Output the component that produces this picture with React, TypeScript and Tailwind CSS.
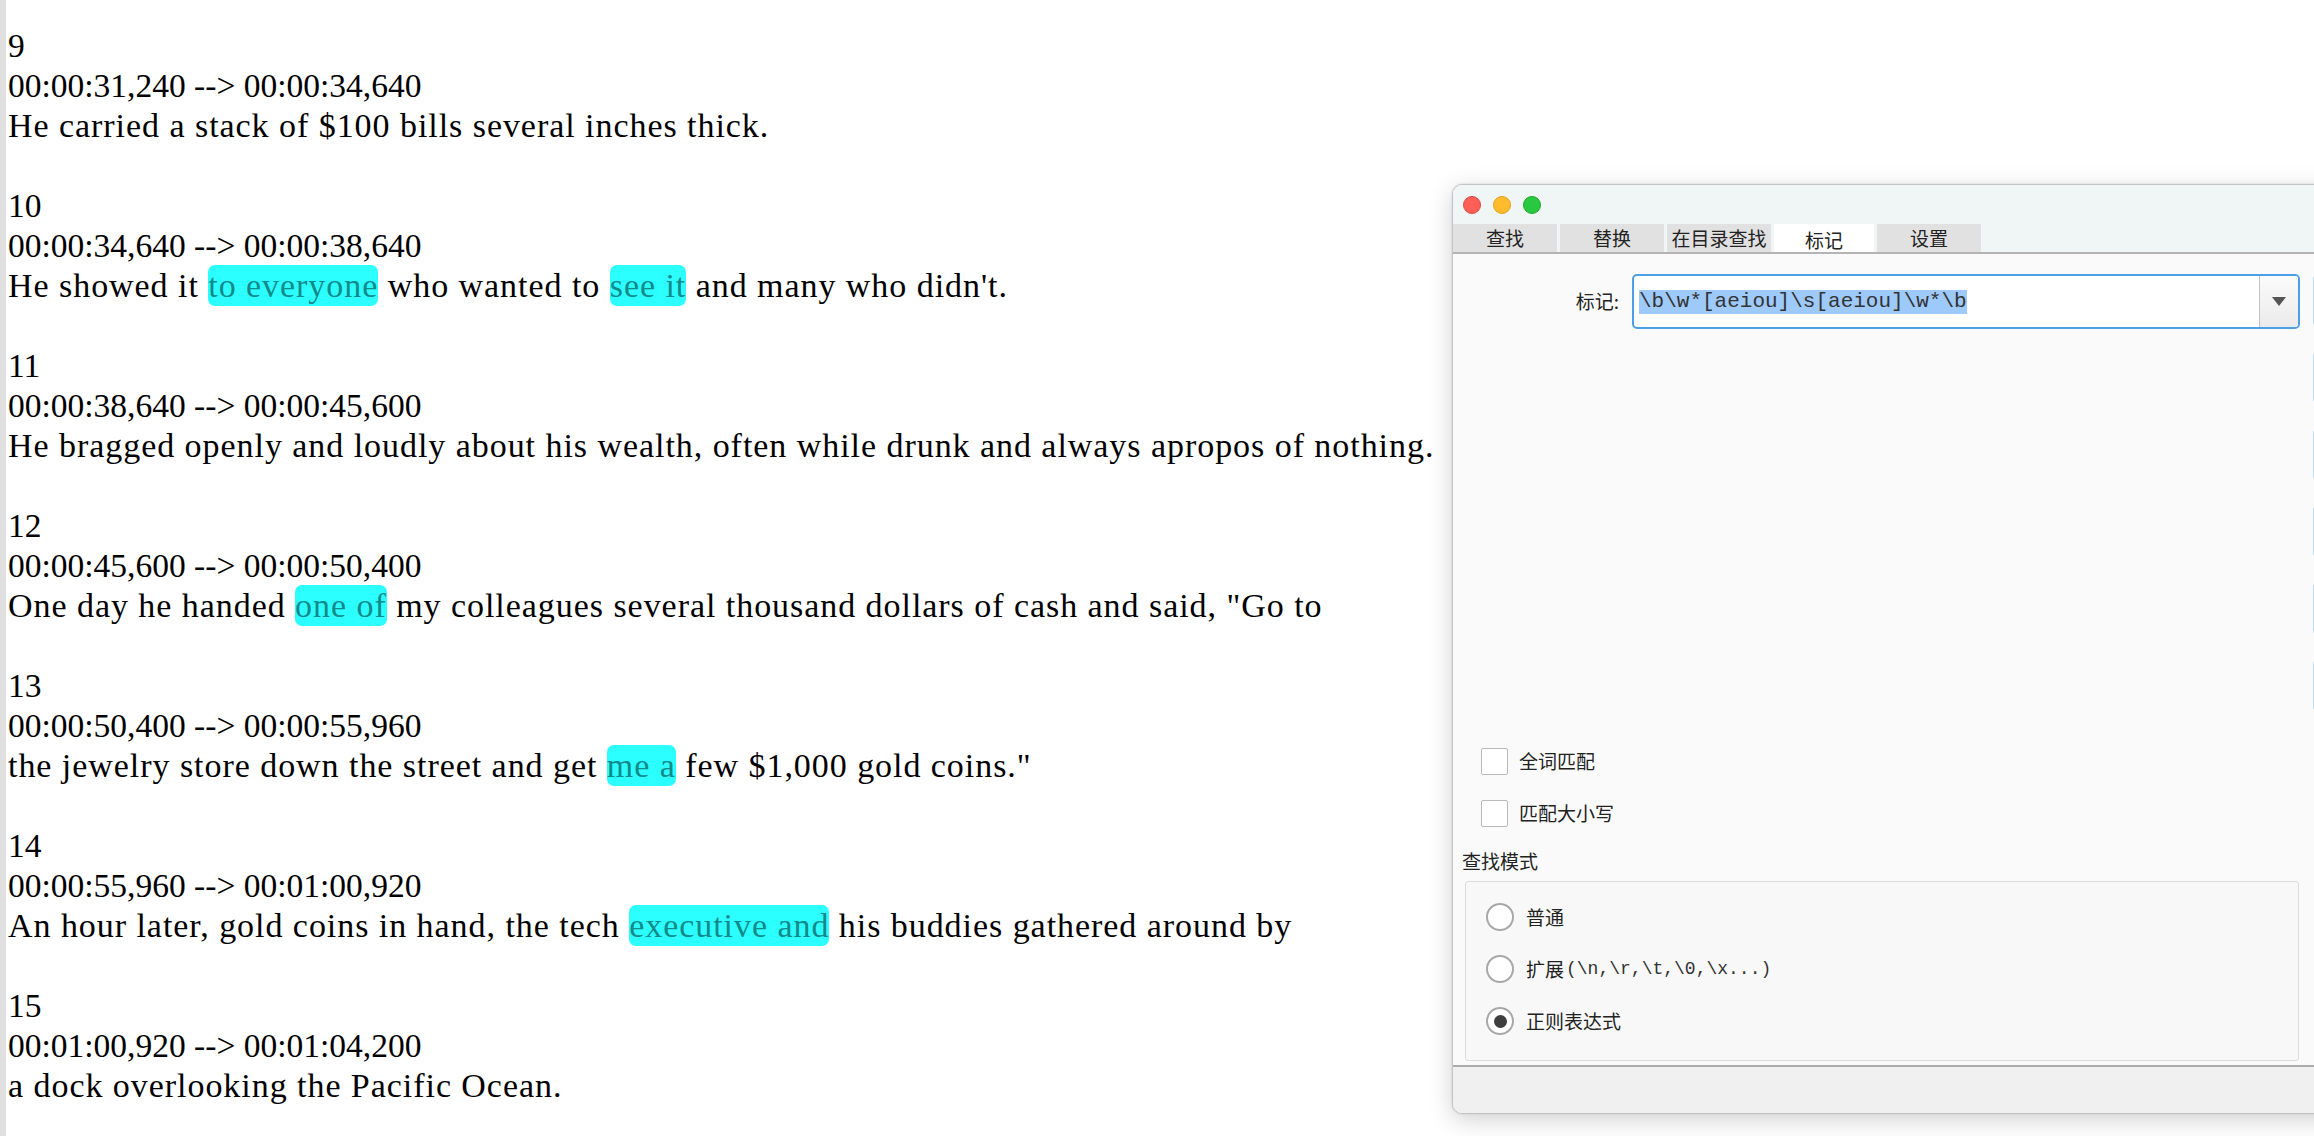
import React, { FC } from 'react';

type Seg = [string, boolean?];

interface Cue {
  index: number;
  time: string;
  text: Seg[];
}

const cues: Cue[] = [
  { index: 9, time: '00:00:31,240 --> 00:00:34,640', text: [['He carried a stack of $100 bills several inches thick.']] },
  {
    index: 10,
    time: '00:00:34,640 --> 00:00:38,640',
    text: [['He showed it '], ['to everyone', true], [' who wanted to '], ['see it', true], [" and many who didn't."]],
  },
  {
    index: 11,
    time: '00:00:38,640 --> 00:00:45,600',
    text: [['He bragged openly and loudly about his wealth, often while drunk and always apropos of nothing.']],
  },
  {
    index: 12,
    time: '00:00:45,600 --> 00:00:50,400',
    text: [['One day he handed '], ['one of', true], [' my colleagues several thousand dollars of cash and said, "Go to']],
  },
  {
    index: 13,
    time: '00:00:50,400 --> 00:00:55,960',
    text: [['the jewelry store down the street and get '], ['me a', true], [' few $1,000 gold coins."']],
  },
  {
    index: 14,
    time: '00:00:55,960 --> 00:01:00,920',
    text: [['An hour later, gold coins in hand, the tech '], ['executive and', true], [' his buddies gathered around by']],
  },
  { index: 15, time: '00:01:00,920 --> 00:01:04,200', text: [['a dock overlooking the Pacific Ocean.']] },
];

const serif = "font-['Liberation_Serif','DejaVu_Serif',serif]";
const cjk = "font-['Noto_Sans_CJK_SC','Noto_Sans',sans-serif]";
const mono = "font-['Liberation_Mono','DejaVu_Sans_Mono',monospace]";

const CueBlock: FC<{ cue: Cue }> = ({ cue }) => (
  <div className="flex flex-col">
    <div className="h-[40px] leading-[40px] text-[33.5px]">{cue.index}</div>
    <div className="h-[40px] leading-[40px] text-[33.5px]">{cue.time}</div>
    <div className="h-[40px] leading-[40px] text-[34px] tracking-[0.95px] whitespace-nowrap">
      {cue.text.map(([t, hl], i) =>
        hl ? (
          <span key={i} className="bg-[#2cffff] text-[#128a8a] rounded-[7px] py-[2px]">
            {t}
          </span>
        ) : (
          <span key={i}>{t}</span>
        )
      )}
    </div>
    <div className="h-[40px]" />
  </div>
);

const tabs = ['查找', '替换', '在目录查找', '标记', '设置'];

const Checkbox: FC<{ label: string }> = ({ label }) => (
  <div className="flex items-center h-[27px] pl-[28px]">
    <div className="w-[27px] h-[27px] bg-white border-[1.5px] border-[#b9b9b9] rounded-[2px]" />
    <span className="ml-[11px] text-[19px] text-[#222]">{label}</span>
  </div>
);

const Radio: FC<{ checked?: boolean; children: React.ReactNode }> = ({ checked, children }) => (
  <div className="flex items-center h-[28px]">
    <div className="w-[28px] h-[28px] rounded-full bg-white border-2 border-[#a8a8a8] flex items-center justify-center">
      {checked && <div className="w-[13px] h-[13px] rounded-full bg-[#3e3e3e]" />}
    </div>
    <span className="ml-[12px] text-[19px] text-[#222] flex items-center">{children}</span>
  </div>
);

const FindWindow: FC = () => (
  <div
    className={`absolute left-[1452px] top-[184px] w-[1000px] h-[930px] rounded-[10px] border border-[#c4c4c4] bg-[#fafafa] overflow-hidden flex flex-col ${cjk}`}
    style={{ boxShadow: '0 6px 24px rgba(0,0,0,0.18), 0 0 2px rgba(0,0,0,0.15)' }}
  >
    {/* title bar */}
    <div className="h-[39px] bg-[#f0f5f5] flex items-center pl-[10px] gap-[12px]">
      <div className="w-[18px] h-[18px] rounded-full bg-[#ff5f57] border border-[#e2463f]" />
      <div className="w-[18px] h-[18px] rounded-full bg-[#febc2e] border border-[#e1a116]" />
      <div className="w-[18px] h-[18px] rounded-full bg-[#28c840] border border-[#1aab29]" />
    </div>
    {/* tabs */}
    <div className="h-[30px] bg-[#f0f5f5] flex gap-[3px] border-b-2 border-[#b4b4b4]">
      {tabs.map((t) =>
        t === '标记' ? (
          <div key={t} className="w-[100px] bg-white flex flex-col">
            <div className="h-[5px] bg-[#ffa500]" />
            <div className="flex-1 flex items-center justify-center text-[19px] text-[#222] pt-[2px]">{t}</div>
          </div>
        ) : (
          <div key={t} className="w-[104px] bg-[#e1e1e1] flex items-center justify-center text-[19px] text-[#222]">
            {t}
          </div>
        )
      )}
    </div>
    {/* body */}
    <div className="flex-1 flex flex-col">
      <div className="flex items-start mt-[20px]">
        <div className="w-[166px] h-[55px] flex items-center justify-end text-[19px] text-[#222]">标记:</div>
        <div className="ml-[13px] w-[668px] h-[55px] rounded-[5px] border-2 border-[#4b9fe9] bg-white flex">
          <div className="flex-1 flex items-center pl-[5px]">
            <span className={`${mono} text-[21px] leading-[24px] bg-[#9dcafb] text-[#333]`}>
              {'\\b\\w*[aeiou]\\s[aeiou]\\w*\\b'}
            </span>
          </div>
          <div className="w-[39px] border-l border-[#c2c2c2] bg-gradient-to-b from-[#fbfbfb] to-[#ebebeb] flex items-center justify-center rounded-r-[3px]">
            <svg width="14" height="9" viewBox="0 0 14 9">
              <path d="M0 0 H14 L7 9 Z" fill="#555" />
            </svg>
          </div>
        </div>
        <div className="ml-[13px] flex flex-col gap-[24px]">
          {[0, 1, 2, 3, 4, 5].map((i) => (
            <div key={i} className="w-[120px] h-[53px] rounded-[5px] border-2 border-[#b7dcf6] bg-[#f4f9fd]" />
          ))}
        </div>
      </div>
      <div className="mt-[36px] flex flex-col gap-[25px]">
        <Checkbox label="全词匹配" />
        <Checkbox label="匹配大小写" />
      </div>
      <div className="mt-[21px] pl-[9px] h-[26px] flex items-center text-[19px] text-[#222]">查找模式</div>
      <div className="mt-[7px] ml-[12px] w-[834px] h-[180px] border border-[#dcdcdc] rounded-[3px] bg-[#f8f8f8] flex flex-col gap-[24px] pl-[20px] pt-[21px]">
        <Radio>普通</Radio>
        <Radio>
          扩展<span className={`${mono} text-[18px] text-[#333] ml-[2px]`}>{'(\\n,\\r,\\t,\\0,\\x...)'}</span>
        </Radio>
        <Radio checked>正则表达式</Radio>
      </div>
    </div>
    {/* footer */}
    <div className="h-[48px] bg-[#f0f0f0] border-t-2 border-[#ababab]" />
  </div>
);

const App: FC = () => {
  return (
    <div className="relative w-[2314px] h-[1136px] overflow-hidden bg-white flex">
      <div className="w-[6px] h-full bg-[#e0e0e0] shrink-0" />
      <div className={`pl-[2px] pt-[26px] text-black ${serif}`}>
        {cues.map((c) => (
          <CueBlock key={c.index} cue={c} />
        ))}
      </div>
      <FindWindow />
    </div>
  );
};

export default App;
